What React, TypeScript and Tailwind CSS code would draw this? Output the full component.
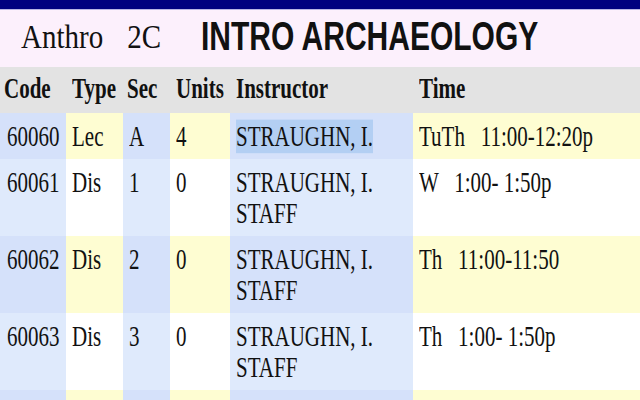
import React from 'react';

type Row = {
  code: string;
  type: string;
  sec: string;
  units: string;
  instructor: string[];
  time: string;
};

const rows: Row[] = [
  { code: '60060', type: 'Lec', sec: 'A', units: '4', instructor: ['STRAUGHN, I.'], time: 'TuTh   11:00-12:20p' },
  { code: '60061', type: 'Dis', sec: '1', units: '0', instructor: ['STRAUGHN, I.', 'STAFF'], time: 'W   1:00- 1:50p' },
  { code: '60062', type: 'Dis', sec: '2', units: '0', instructor: ['STRAUGHN, I.', 'STAFF'], time: 'Th   11:00-11:50' },
  { code: '60063', type: 'Dis', sec: '3', units: '0', instructor: ['STRAUGHN, I.', 'STAFF'], time: 'Th   1:00- 1:50p' },
];

const cols = 'grid grid-cols-[66px_57px_47px_60px_183px_1fr]';

// the source screenshot is stretched vertically, so text gets a y-scale
function Txt({ children, bold }: { children: React.ReactNode; bold?: boolean }) {
  return (
    <div
      className={`origin-top-left scale-y-[1.4] text-[21px] leading-[22px] whitespace-pre text-[#111] ${bold ? 'font-bold' : ''}`}
    >
      {children}
    </div>
  );
}

export default function App() {
  return (
    <div className="w-[640px] h-[400px] overflow-hidden bg-white font-['Liberation_Serif','Times_New_Roman',serif]">
      <div className="h-[9px] bg-[#000080]" />
      <div className="h-px bg-[#b8b4e4]" />

      {/* Course title */}
      <div className="h-[57px] bg-[#fcf0fc] flex items-start">
        <span className="ml-[21px] mt-[10px] inline-block origin-top-left scale-y-[1.18] text-[29px] leading-[29px] text-[#111]">
          Anthro
        </span>
        <span className="ml-[24px] mt-[10px] inline-block origin-top-left scale-y-[1.18] text-[29px] leading-[29px] text-[#111]">
          2C
        </span>
        <span className="ml-[40px] mt-[6px] inline-block origin-top-left scale-y-[1.35] text-[30px] leading-[30px] font-bold text-[#111] font-['Liberation_Sans',Arial,sans-serif]">
          INTRO ARCHAEOLOGY
        </span>
      </div>

      {/* Header */}
      <div className={`${cols} h-[46px] bg-[#e3e3e3] pt-[6px]`}>
        <div className="pl-[4px]"><Txt bold>Code</Txt></div>
        <div className="pl-[6px]"><Txt bold>Type</Txt></div>
        <div className="pl-[4px]"><Txt bold>Sec</Txt></div>
        <div className="pl-[6px]"><Txt bold>Units</Txt></div>
        <div className="pl-[6px]"><Txt bold>Instructor</Txt></div>
        <div className="pl-[6px]"><Txt bold>Time</Txt></div>
      </div>

      {rows.map((r, i) => {
        const odd = i % 2 === 0;
        const blue = odd ? 'bg-[#d5e1fa]' : 'bg-[#dfeafc]';
        const alt = odd ? 'bg-[#fefdd2]' : 'bg-white';
        const h = i === 0 ? 'h-[46px]' : 'h-[77px]';
        return (
          <div key={r.code} className={`${cols} ${h}`}>
            <div className={`${blue} pl-[7px] pt-[8px]`}><Txt>{r.code}</Txt></div>
            <div className={`${alt} pl-[6px] pt-[8px]`}><Txt>{r.type}</Txt></div>
            <div className={`${blue} pl-[6px] pt-[8px]`}><Txt>{r.sec}</Txt></div>
            <div className={`${alt} pl-[6px] pt-[8px]`}><Txt>{r.units}</Txt></div>
            <div className={`${blue} pl-[6px] pt-[8px]`}>
              <Txt>
                {r.instructor.map((name, j) => (
                  <div key={j}>
                    {i === 0 ? <span className="bg-[#b3cff3]">{name}</span> : name}
                  </div>
                ))}
              </Txt>
            </div>
            <div className={`${alt} pl-[6px] pt-[8px]`}><Txt>{r.time}</Txt></div>
          </div>
        );
      })}

      {/* next row, only its top edge shows */}
      <div className={`${cols} h-[77px]`}>
        <div className="bg-[#d5e1fa]" />
        <div className="bg-[#fefdd2]" />
        <div className="bg-[#d5e1fa]" />
        <div className="bg-[#fefdd2]" />
        <div className="bg-[#d5e1fa]" />
        <div className="bg-[#fefdd2]" />
      </div>
    </div>
  );
}
